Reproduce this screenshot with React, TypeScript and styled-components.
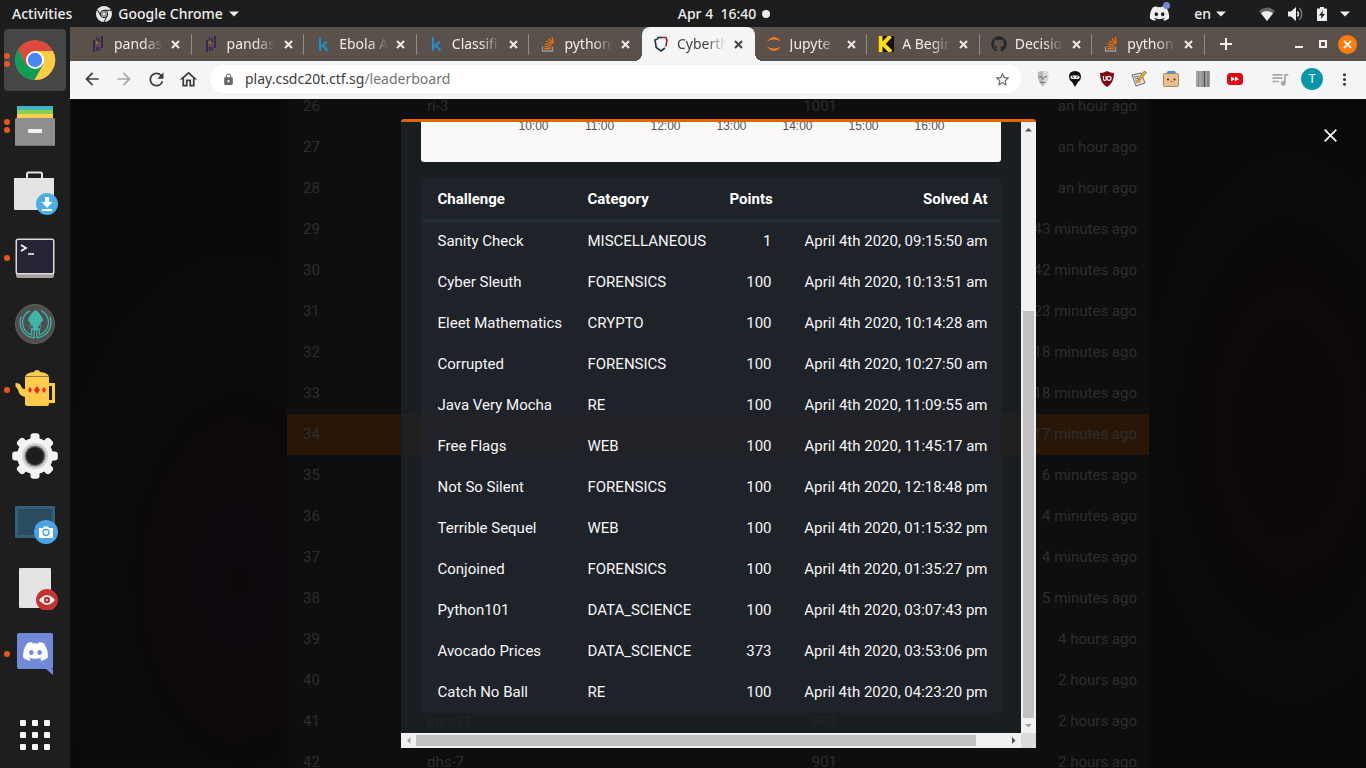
import React from "react";
import styled, { createGlobalStyle } from "styled-components";
import { FaDiscord, FaGithub, FaGitkraken } from "react-icons/fa";
import {
  MdArrowBack,
  MdArrowForward,
  MdRefresh,
  MdOutlineHome,
  MdLock,
  MdStarOutline,
  MdMoreVert,
  MdOutlineQueueMusic,
} from "react-icons/md";

const uiFont = `"Noto Sans", "Open Sans", sans-serif`;
const siteFont = `Roboto, "Noto Sans", sans-serif`;

const GlobalStyle = createGlobalStyle`
  * { box-sizing: border-box; }
  body { margin: 0; background: #0a0a0b; font-family: ${uiFont}; }
  button { border: 0; padding: 0; margin: 0; background: none; color: inherit; font: inherit; cursor: pointer; }
  a { color: inherit; text-decoration: none; }
  svg { display: block; flex: none; }
`;

const Desktop = styled.div`
  display: grid;
  grid-template-columns: 70px minmax(0, 1fr);
  grid-template-rows: 27px minmax(0, 1fr);
  height: 100vh;
  overflow: hidden;
`;

/* ---------- top bar ---------- */

const TopBar = styled.header`
  grid-column: 1 / -1;
  display: grid;
  grid-template-columns: 1fr auto 1fr;
  align-items: center;
  padding: 0 16px 0 12px;
  background: #1d1d1d;
  color: #eee;
  font-size: 14px;
  font-weight: 500;
  line-height: 27px;
`;

const BarGroup = styled.div<{ $end?: boolean }>`
  display: flex;
  align-items: center;
  gap: ${(p) => (p.$end ? 0 : 24)}px;
  justify-content: ${(p) => (p.$end ? "flex-end" : "flex-start")};
`;

const BarButton = styled.button<{ $gap?: number; $after?: number }>`
  display: flex;
  align-items: center;
  gap: ${(p) => p.$gap ?? 6}px;
  margin-right: ${(p) => p.$after ?? 0}px;
  white-space: pre;
`;

const Clock = styled(BarButton)`
  margin-left: 86px;
`;

const BadgeHolder = styled.span`
  position: relative;
  display: block;
`;

const Badge = styled.i`
  position: absolute;
  top: -1px;
  right: 0;
  width: 7px;
  height: 7px;
  border-radius: 50%;
  background: #7289da;
`;

const Caret = () => (
  <svg width="10" height="6" viewBox="0 0 10 6"><path d="M0 .5h10L5 5.5z" fill="#eee" /></svg>
);

/* ---------- dock ---------- */

const Dock = styled.nav`
  display: flex;
  flex-direction: column;
  gap: 4px;
  padding: 2px 4px;
  background: #1e1e1e;
`;

const DockItem = styled.button<{ $active?: boolean; $last?: boolean }>`
  position: relative;
  display: grid;
  place-items: center;
  flex: none;
  width: 62px;
  height: 62px;
  margin-top: ${(p) => (p.$last ? "auto" : 0)};
  border-radius: 4px;
  background: ${(p) => (p.$active ? "#464646" : "transparent")};
`;

const Dots = styled.span`
  position: absolute;
  left: 0;
  top: 0;
  bottom: 0;
  display: flex;
  flex-direction: column;
  justify-content: center;
  gap: 2px;
`;

const Dot = styled.i`
  width: 6px;
  height: 6px;
  border-radius: 50%;
  background: #e95420;
`;

const ChromeIcon = () => (
  <svg width="42" height="42" viewBox="0 0 42 42">
    <circle cx="21" cy="21" r="20" fill="#dd4b3e" />
    <path d="M21 12h18A20 20 0 0 1 20 41l9-15.500z" fill="#ffcd42" />
    <path d="M4.200 10A20 20 0 0 0 20.500 41l8-14.500-7.500 3.500-9-4z" fill="#109d58" />
    <circle cx="21" cy="21" r="9" fill="#fff" />
    <circle cx="21" cy="21" r="7.200" fill="#4688f4" />
  </svg>
);

const FilesIcon = () => (
  <svg width="42" height="42" viewBox="0 0 42 42">
    <path d="M3 1h36v5H3z" fill="#45b5c4" />
    <path d="M3 5h36v5H3z" fill="#86d04f" />
    <path d="M3 9h36v5H3z" fill="#ffcc52" />
    <rect x="1" y="13" width="40" height="28" rx="1.500" fill="#8f8f8f" />
    <path d="M1 40h40q-.3 1-1.500 1h-37Q1.300 41 1 40z" fill="#747474" />
    <rect x="14" y="24" width="14" height="4" rx="1" fill="#f2f2f2" />
  </svg>
);

const SoftwareIcon = () => (
  <svg width="48" height="48" viewBox="0 0 48 48">
    <path d="M16 10V6q0-1.500 1.500-1.500h12Q31 4.500 31 6v4" fill="none" stroke="#e4e4e4" strokeWidth="2" />
    <path d="M3 10h40v30.500q0 1.500-1.500 1.500h-37Q3 42 3 40.500z" fill="#e4e4e4" />
    <circle cx="36" cy="36" r="11" fill="#4bafe3" />
    <path d="M34 29h4v5h3.500L36 40l-5.500-6H34zM31 41h10v2H31z" fill="#fff" />
  </svg>
);

const TerminalIcon = () => (
  <svg width="42" height="42" viewBox="0 0 42 42">
    <rect x="2" y="4" width="38" height="37" rx="2.500" fill="#a49fa0" />
    <rect x="1.500" y="1.500" width="39" height="36" rx="2.500" fill="#ded9da" />
    <rect x="3" y="3" width="36" height="33" rx="1" fill="#282335" />
    <path d="M7 8l5 3-5 3M14 17h6" fill="none" stroke="#fff" strokeWidth="1.700" />
  </svg>
);

const KrakenDisc = styled.span`
  display: grid;
  place-items: center;
  width: 40px;
  height: 40px;
  border: 1px solid #606060;
  border-radius: 50%;
  background: #4f4f4f;
  color: #3fb4ab;
`;

const TeapotIcon = () => (
  <svg width="42" height="42" viewBox="0 0 42 42">
    <path d="M35 15.500h4.500v17H35" fill="none" stroke="#ffcb4c" strokeWidth="3" />
    <path d="M11 8q1-4.500 9-5 .5-2 3-2t3 2q8 .5 9 5v27q0 2-2 2H13q-2 0-2-2v-7q-6-1.500-6.500-6Q3 18 1.500 17.500V14q5 0 6 4 .8 2.500 3.500 2z" fill="#ffcb4c" />
    <path d="M11 7.500h24" stroke="#8d7b48" />
    <path d="M16 18l2 3-2 3-2-3zM23 17l3 4-3 4-3-4zM30 18l2 3-2 3-2-3z" fill="#e6281e" />
  </svg>
);

const GearIcon = () => (
  <svg width="46" height="46" viewBox="-23 -23 46 46">
    {[0, 45, 90, 135].map((a) => (
      <rect key={a} x="-4.500" y="-22.800" width="9" height="45.600" rx="3" fill="#f3f2f1" transform={`rotate(${a})`} />
    ))}
    <circle r="18" fill="#f5f4f3" />
    <circle r="13" fill="#d2d0ce" />
    <circle r="10.500" fill="#737270" />
    <circle r="9" fill="#1e1e1e" />
  </svg>
);

const ScreenshotIcon = () => (
  <svg width="48" height="44" viewBox="0 0 48 44">
    <rect x="4" y="6" width="40" height="32" rx="1" fill="#33617a" />
    <rect x="7" y="9" width="34" height="26" fill="#294c5f" />
    <circle cx="35" cy="32" r="12" fill="#4ba3e3" />
    <path d="M28 28h4l1-1.500h4l1 1.500h4v10H28z" fill="#fff" />
    <circle cx="35" cy="32.500" r="3" fill="none" stroke="#4ba3e3" strokeWidth="1.300" />
  </svg>
);

const ViewerIcon = () => (
  <svg width="48" height="44" viewBox="0 0 48 44">
    <rect x="8" y="2" width="32" height="40" rx="1" fill="#e4e4e4" />
    <circle cx="36" cy="34" r="11" fill="#c4332e" />
    <path d="M28 34q8-9.500 16 0-8 9.500-16 0z" fill="#fff" />
    <circle cx="36" cy="34" r="3.200" fill="#c4332e" />
    <circle cx="36" cy="34" r="1" fill="#fff" />
  </svg>
);

const DiscordTile = styled.span`
  position: relative;
  display: grid;
  place-items: center;
  width: 36px;
  height: 36px;
  margin-bottom: 6px;
  border-radius: 2px;
  background: #7289da;
  color: #fff;

  &::after {
    content: "";
    position: absolute;
    right: 0;
    top: 100%;
    border-top: 6px solid #7289da;
    border-left: 7px solid transparent;
  }
`;

const AppsIcon = () => (
  <svg width="30" height="30" viewBox="0 0 30 30">
    {[0, 12, 24].map((y) => [0, 12, 24].map((x) => (
      <rect key={`${x}-${y}`} x={x} y={y} width="6" height="6" rx="1" fill="#f7f7f7" />
    )))}
  </svg>
);

const dockItems: { label: string; dots: number; icon: React.ReactNode; active?: boolean }[] = [
  { label: "Google Chrome", dots: 2, icon: <ChromeIcon />, active: true },
  { label: "Files", dots: 2, icon: <FilesIcon /> },
  { label: "Software Updater", dots: 0, icon: <SoftwareIcon /> },
  { label: "Terminal", dots: 1, icon: <TerminalIcon /> },
  { label: "GitKraken", dots: 0, icon: <KrakenDisc><FaGitkraken size={33} /></KrakenDisc> },
  { label: "Teapot", dots: 1, icon: <TeapotIcon /> },
  { label: "Settings", dots: 0, icon: <GearIcon /> },
  { label: "Screenshot", dots: 0, icon: <ScreenshotIcon /> },
  { label: "Document Viewer", dots: 0, icon: <ViewerIcon /> },
  { label: "Discord", dots: 1, icon: <DiscordTile><FaDiscord size={27} /></DiscordTile> },
];

/* ---------- browser chrome ---------- */

const Browser = styled.main`
  display: grid;
  grid-template-columns: minmax(0, 1fr);
  grid-template-rows: 34px 38px minmax(0, 1fr);
  min-width: 0;
`;

const TabStrip = styled.div`
  display: flex;
  padding-left: 9px;
  background: #5a514b;
`;

const Tabs = styled.div`
  display: flex;
  flex: 1;
  min-width: 0;
`;

const Tab = styled.div<{ $active?: boolean; $divider?: boolean }>`
  position: relative;
  display: flex;
  flex: 1 1 0;
  align-items: center;
  min-width: 0;
  padding: 0 7px 0 11px;
  border-radius: 8px 8px 0 0;
  background: ${(p) => (p.$active ? "#f5f5f5" : "transparent")};
  color: ${(p) => (p.$active ? "#45413e" : "#eeeceb")};

  &::before,
  &::after {
    content: "";
    position: absolute;
    bottom: 0;
    display: ${(p) => (p.$active ? "block" : "none")};
    width: 8px;
    height: 8px;
  }
  &::before {
    right: 100%;
    background: radial-gradient(circle at 0 0, transparent 8px, #f5f5f5 8px);
  }
  &::after {
    left: 100%;
    background: radial-gradient(circle at 100% 0, transparent 8px, #f5f5f5 8px);
  }
  ${(p) => p.$divider && `
    &::after {
      display: block;
      left: auto;
      right: 0;
      top: 7px;
      width: 1px;
      height: 21px;
      background: #918b87;
    }
  `}
`;

const TabTitle = styled.a`
  flex: 1;
  min-width: 0;
  margin-left: 8px;
  overflow: hidden;
  white-space: nowrap;
  font-size: 14px;
  line-height: 20px;
  mask-image: linear-gradient(to right, #000 60%, transparent 100%);
`;

const TabClose = styled.button`
  display: grid;
  place-items: center;
  width: 18px;
  height: 18px;
  margin-left: 4px;
`;

const Cross = ({ size = 9, width = 2 }: { size?: number; width?: number }) => (
  <svg width={size} height={size} viewBox="0 0 9 9">
    <path d="M1 1l7 7M8 1L1 8" stroke="currentColor" strokeWidth={width} />
  </svg>
);

const WindowControls = styled.div`
  display: flex;
  align-items: center;
  padding: 0 9px;
  color: #f2f0ef;
`;

const ControlButton = styled.button<{ $close?: boolean; $after?: number }>`
  display: grid;
  place-items: center;
  width: ${(p) => (p.$close ? 19 : 24)}px;
  height: ${(p) => (p.$close ? 19 : 24)}px;
  margin-right: ${(p) => p.$after ?? 0}px;
  border-radius: 50%;
  background: ${(p) => (p.$close ? "#fa7c09" : "none")};
`;

const PandasIcon = () => (
  <svg width="16" height="16" viewBox="0 0 16 16">
    <path d="M3 4h2v12H3zM6 1h1.500v3.500H6zM6 11h1.500v4H6zM8.500 2H10v4H8.500zM8.500 11H10v3.500H8.500zM11 0h2v12h-2z" fill="#3a2550" />
    <path d="M6 5.500h1.500v2H6z" fill="#a98d12" />
    <path d="M8.500 8.500H10v2H8.500z" fill="#a0175e" />
  </svg>
);

const KaggleIcon = () => (
  <svg width="16" height="16" viewBox="0 0 16 16">
    <path d="M5 1v14M12 5.500L6 11M8 9.500l4.500 5.500" fill="none" stroke="#1e8fc8" strokeWidth="2" />
  </svg>
);

const StackIcon = () => (
  <svg width="16" height="16" viewBox="0 0 16 16">
    <path d="M2.500 10.500v4.500h10v-4.500" fill="none" stroke="#9c9a98" strokeWidth="1.300" />
    <path d="M4.200 12.700h6.600M4.300 10.500l6.600.6M4.900 7.800l6.300 1.700M6.300 5l5.700 3.300M8.800 2.500l4.100 5M12 1l1.500 6" stroke="#f2700d" strokeWidth="1.200" />
  </svg>
);

const ShieldIcon = () => (
  <svg width="16" height="16" viewBox="0 0 16 16">
    <path d="M5.500 1.500Q4.500 3.500 2 4l1.200 7.500L8 15l4-3" fill="none" stroke="#213443" strokeWidth="1.600" />
    <path d="M4.500 1.500H9" fill="none" stroke="#213443" strokeWidth="1.600" />
    <path d="M8.500 1.500H13l1 3-1.200 6" fill="none" stroke="#a3182f" strokeWidth="1.600" />
  </svg>
);

const JupyterIcon = () => (
  <svg width="16" height="16" viewBox="0 0 16 16">
    <path d="M1 5.500Q8-3.500 15 5.500 8 1.500 1 5.500zM1 10.500q7 9 14 0-7 4-14 0z" fill="#f37726" />
  </svg>
);

const KDIcon = () => (
  <svg width="16" height="16" viewBox="0 0 16 16">
    <path d="M0 0h16v16H0z" fill="#111" />
    <path d="M2.500 0v16M12.500 0L5 8l8 8" fill="none" stroke="#ffde17" strokeWidth="4" />
  </svg>
);

const tabs: { title: string; icon: React.ReactNode; active?: boolean }[] = [
  { title: "pandas", icon: <PandasIcon /> },
  { title: "pandas", icon: <PandasIcon /> },
  { title: "Ebola A", icon: <KaggleIcon /> },
  { title: "Classifi", icon: <KaggleIcon /> },
  { title: "python", icon: <StackIcon /> },
  { title: "Cyberth", icon: <ShieldIcon />, active: true },
  { title: "Jupyte", icon: <JupyterIcon /> },
  { title: "A Begin", icon: <KDIcon /> },
  { title: "Decisio", icon: <FaGithub size={16} color="#24292e" /> },
  { title: "python", icon: <StackIcon /> },
];

const Toolbar = styled.div`
  display: flex;
  align-items: center;
  padding: 0 6px 2px 6px;
  background: #f5f5f5;
  color: #403b38;
`;

const ToolButton = styled.button<{ $dim?: boolean; $after?: number }>`
  display: grid;
  place-items: center;
  width: 32px;
  height: 32px;
  margin-right: ${(p) => p.$after ?? 0}px;
  color: ${(p) => (p.$dim ? "#a9a7a5" : "inherit")};
`;

const AddressBar = styled.form`
  display: flex;
  flex: 1;
  align-items: center;
  height: 28px;
  margin: 0 6px;
  padding: 0 10px 0 12px;
  border-radius: 14px;
  background: #fff;
  color: #6b6764;
`;

const AddressField = styled.label`
  position: relative;
  flex: 1;
  margin-left: 10px;
  font-size: 14px;
  line-height: 20px;
`;

const AddressInput = styled.input`
  display: block;
  width: 100%;
  padding: 0;
  border: 0;
  outline: 0;
  background: transparent;
  font: inherit;
`;

const AddressText = styled.span`
  position: absolute;
  inset: 0;
  color: #77736f;
  pointer-events: none;

  b { color: #3f3b38; font-weight: 400; }
`;

const Avatar = styled.span`
  display: grid;
  place-items: center;
  width: 22px;
  height: 22px;
  border-radius: 50%;
  background: #0997a7;
  color: #fff;
  font: 12px/22px Roboto, sans-serif;
`;

const extensions: { label: string; icon: React.ReactNode }[] = [
  {
    label: "Mask",
    icon: (
      <svg width="16" height="16" viewBox="0 0 16 16">
        <path d="M3 1q5-2 10 0 1.500 9-5 15Q1.500 10 3 1z" fill="#b9b9b9" />
        <path d="M8 0q3 0 5 1 1.500 9-5 15z" fill="#dadada" />
        <path d="M4 5.500l3 .7M9 6.200l3-.7M5.500 11q2.500 1.500 5 0M8 6v3" stroke="#606060" fill="none" />
      </svg>
    ),
  },
  {
    label: "Privacy",
    icon: (
      <svg width="16" height="16" viewBox="0 0 16 16">
        <path d="M8 0q6 0 6 6 0 3-3 5l-3 5-3-5Q2 9 2 6q0-6 6-6z" fill="#111" />
        <rect x="3.500" y="4.500" width="9" height="3.500" rx="1.700" fill="#fff" />
        <path d="M5 5.500l2 1M11 5.500l-2 1" stroke="#111" />
      </svg>
    ),
  },
  {
    label: "Blocker",
    icon: (
      <svg width="16" height="16" viewBox="0 0 16 16">
        <path d="M8 0q3 2 7 2 0 10-7 14Q1 12 1 2q4 0 7-2z" fill="#800610" />
        <path d="M4.500 5v3q0 1.500 1.300 1.500T7.200 8V5" fill="none" stroke="#fff" strokeWidth="1.200" />
        <circle cx="10" cy="7.300" r="2" fill="none" stroke="#fff" strokeWidth="1.200" />
      </svg>
    ),
  },
  {
    label: "Notes",
    icon: (
      <svg width="16" height="16" viewBox="0 0 16 16">
        <path d="M1 4l9-2 4 10-9 3z" fill="#e7e5e0" stroke="#6c6c6c" />
        <path d="M3 6l5-1M4 8l3-.7M5 12l5-2" stroke="#777" />
        <path d="M13.500 0l2 1.500-6 7-2.500 1 .5-2.500z" fill="#f0b21c" stroke="#5a4a20" strokeWidth=".6" />
        <path d="M4 9q4-1 5 1t-4 2z" fill="#f29549" />
      </svg>
    ),
  },
  {
    label: "Box",
    icon: (
      <svg width="16" height="16" viewBox="0 0 16 16">
        <path d="M3.500 3q0-3 2.500-3h5q2 0 2 3z" fill="#4a8af4" />
        <rect x=".5" y="2.500" width="15" height="13" rx="1" fill="#e9c08c" stroke="#a38762" />
        <circle cx="5" cy="8.500" r="1" fill="#222" />
        <circle cx="11.500" cy="8.500" r="1" fill="#222" />
        <path d="M7.500 10.500h2" stroke="#b5483a" />
      </svg>
    ),
  },
  {
    label: "Bars",
    icon: (
      <svg width="14" height="16" viewBox="0 0 14 16">
        <path d="M0 0h14v16H0z" fill="#a6a6a6" />
        <path d="M2.500 0v16M6 0v16" stroke="#868686" />
        <path d="M8.500 0v16" stroke="#505050" strokeWidth="1.500" />
        <path d="M12 0v16" stroke="#7a7a7a" strokeWidth="1.500" />
      </svg>
    ),
  },
  {
    label: "Video speed",
    icon: (
      <svg width="16" height="14" viewBox="0 0 16 14">
        <rect y="1" width="16" height="12" rx="3.500" fill="#df0914" />
        <path d="M4 4.500L8 7l-4 2.500zM8 4.500L12 7 8 9.500z" fill="#fff" />
      </svg>
    ),
  },
];

/* ---------- leaderboard page ---------- */

const Page = styled.section`
  position: relative;
  overflow: hidden;
  background:
    radial-gradient(ellipse 160px 300px at 1220px 330px, #0e070c, transparent),
    radial-gradient(ellipse 200px 340px at 170px 480px, #0e080d, transparent),
    #0a0a0b;
  font-family: ${siteFont};
  font-size: 15px;
`;

const Board = styled.table`
  width: 862px;
  max-width: 100%;
  margin: -13px auto 0;
  border-collapse: collapse;
  table-layout: fixed;
  background: #0e0e0f;
  color: #2d2d2d;
`;

const BoardRow = styled.tr<{ $mine?: boolean }>`
  height: 41px;
  background: ${(p) => (p.$mine ? "#2a1607" : "transparent")};
`;

const BoardCell = styled.td<{ $width?: string; $right?: boolean }>`
  width: ${(p) => p.$width ?? "auto"};
  padding: 0 12px 2px 16px;
  text-align: ${(p) => (p.$right ? "right" : "left")};
`;

const board: [number, string, string, string][] = [
  [26, "ri-3", "1001", "an hour ago"],
  [27, "", "1001", "an hour ago"],
  [28, "hci-6", "1001", "an hour ago"],
  [29, "hci-4", "1001", "43 minutes ago"],
  [30, "njc-6", "1001", "42 minutes ago"],
  [31, "nushs-6", "1001", "23 minutes ago"],
  [32, "hci-12", "1001", "18 minutes ago"],
  [33, "hci-11", "1001", "18 minutes ago"],
  [34, "nyjc-1", "1001", "17 minutes ago"],
  [35, "nyjc-4", "1001", "6 minutes ago"],
  [36, "hci-10", "948", "4 minutes ago"],
  [37, "nushs-3", "933", "4 minutes ago"],
  [38, "ejc-13", "908", "5 minutes ago"],
  [39, "hci-20", "901", "4 hours ago"],
  [40, "dhs-8", "901", "2 hours ago"],
  [41, "jpjc-11", "901", "2 hours ago"],
  [42, "dhs-7", "901", "2 hours ago"],
];

/* ---------- team modal ---------- */

const Overlay = styled.div`
  position: absolute;
  inset: 0;
  display: flex;
  justify-content: center;
  padding: 20px;
`;

const CloseModal = styled.button`
  position: absolute;
  top: 24px;
  right: 24px;
  display: grid;
  place-items: center;
  width: 24px;
  height: 24px;
  color: #fff;
`;

const Modal = styled.div`
  display: grid;
  grid-template-columns: minmax(0, 1fr) 15px;
  grid-template-rows: minmax(0, 1fr) 15px;
  width: 635px;
  max-width: 100%;
  border-top: 3px solid #e46500;
  border-radius: 3px 3px 0 0;
`;

const ModalContent = styled.div`
  display: flex;
  flex-direction: column;
  justify-content: flex-end;
  gap: 16px;
  overflow: hidden;
  padding: 20px;
  background: rgba(29, 35, 38, 0.8);
`;

const ChartCard = styled.div`
  display: flex;
  flex: none;
  align-items: flex-end;
  height: 300px;
  padding: 0 23px 28px 80px;
  border-radius: 3px;
  background: #fcf9fa;
  color: #555;
  font: 12px/16px "Liberation Sans", sans-serif;
`;

const HourLabel = styled.span`
  width: 66px;
  text-align: center;
`;

const Solves = styled.table`
  flex: none;
  width: 100%;
  border-collapse: collapse;
  table-layout: fixed;
  border-radius: 3px;
  background: rgba(33, 36, 46, 0.6);
  color: #f6f6f6;
`;

const Column = styled.th<{ $width?: string; $right?: boolean }>`
  width: ${(p) => p.$width ?? "auto"};
  height: 43px;
  padding: 0 13px 0 17px;
  border-bottom: 2px solid #212b32;
  color: #fff;
  font-weight: 700;
  text-align: ${(p) => (p.$right ? "right" : "left")};
`;

const Cell = styled.td<{ $right?: boolean }>`
  height: 41px;
  padding: 0 ${(p) => (p.$right ? 13 : 0)}px 2px ${(p) => (p.$right ? 0 : 17)}px;
  text-align: ${(p) => (p.$right ? "right" : "left")};
  white-space: nowrap;
`;

const solves: [string, string, string, string][] = [
  ["Sanity Check", "MISCELLANEOUS", "1", "09:15:50 am"],
  ["Cyber Sleuth", "FORENSICS", "100", "10:13:51 am"],
  ["Eleet Mathematics", "CRYPTO", "100", "10:14:28 am"],
  ["Corrupted", "FORENSICS", "100", "10:27:50 am"],
  ["Java Very Mocha", "RE", "100", "11:09:55 am"],
  ["Free Flags", "WEB", "100", "11:45:17 am"],
  ["Not So Silent", "FORENSICS", "100", "12:18:48 pm"],
  ["Terrible Sequel", "WEB", "100", "01:15:32 pm"],
  ["Conjoined", "FORENSICS", "100", "01:35:27 pm"],
  ["Python101", "DATA_SCIENCE", "100", "03:07:43 pm"],
  ["Avocado Prices", "DATA_SCIENCE", "373", "03:53:06 pm"],
  ["Catch No Ball", "RE", "100", "04:23:20 pm"],
];

const Track = styled.div<{ $vertical?: boolean }>`
  display: flex;
  flex-direction: ${(p) => (p.$vertical ? "column" : "row")};
  background: #f1f1f1;
`;

const TrackArrow = styled.button`
  display: grid;
  place-items: center;
  flex: none;
  width: 15px;
  height: 15px;
`;

const Slide = styled.div<{ $vertical?: boolean; $end?: boolean }>`
  display: flex;
  flex: 1;
  flex-direction: ${(p) => (p.$vertical ? "column" : "row")};
  justify-content: ${(p) => (p.$end ? "flex-end" : "flex-start")};
  padding: ${(p) => (p.$vertical ? "0 2px" : "2px 0")};
`;

const Thumb = styled.div<{ $vertical?: boolean; $length: string }>`
  width: ${(p) => (p.$vertical ? "11px" : p.$length)};
  height: ${(p) => (p.$vertical ? p.$length : "11px")};
  background: #c1c1c1;
`;

const Corner = styled.div`
  background: #dcdcdc;
`;

const Arrow = ({ d, dim }: { d: string; dim?: boolean }) => (
  <svg width="7" height="7" viewBox="0 0 7 7"><path d={d} fill={dim ? "#a3a3a3" : "#505050"} /></svg>
);

export default function App() {
  return (
    <Desktop>
      <GlobalStyle />
      <TopBar>
        <BarGroup>
          <BarButton>Activities</BarButton>
          <BarButton>
            <svg width="16" height="16" viewBox="0 0 16 16">
              <circle cx="8" cy="8" r="8" fill="#e6e6e6" />
              <circle cx="8" cy="8" r="3.700" fill="none" stroke="#1d1d1d" />
              <circle cx="8" cy="8" r="2.200" fill="none" stroke="#1d1d1d" strokeWidth=".7" />
              <path d="M8 4.300h7M4.800 9.900L1.500 4M11.200 9.900L8 16" stroke="#1d1d1d" fill="none" />
            </svg>
            Google Chrome
            <Caret />
          </BarButton>
        </BarGroup>
        <Clock>
          {"Apr 4  16:40"}
          <svg width="8" height="8" viewBox="0 0 8 8"><circle cx="4" cy="4" r="4" fill="#eee" /></svg>
        </Clock>
        <BarGroup $end>
          <BarButton $after={24} aria-label="Discord">
            <BadgeHolder><FaDiscord size={21} /><Badge /></BadgeHolder>
          </BarButton>
          <BarButton $after={33} $gap={5}>en<Caret /></BarButton>
          <BarButton $gap={13} aria-label="System menu">
            <svg width="16" height="14" viewBox="0 0 16 14">
              <path d="M0 4q8-7 16 0l-8 10z" fill="#666" />
              <path d="M2 6.300q6-4.600 12 0L8 14z" fill="#eee" />
            </svg>
            <svg width="16" height="14" viewBox="0 0 16 14">
              <path d="M0 4.500h3L8 0v14L3 9.500H0z" fill="#eee" />
              <path d="M9.500 4.500q2 2.500 0 5" fill="none" stroke="#eee" strokeWidth="1.400" />
              <path d="M11.500 1q4.500 6 0 12" fill="none" stroke="#777" strokeWidth="1.400" />
            </svg>
            <svg width="10" height="14" viewBox="0 0 10 14">
              <path d="M0 1.500h3V0h4v1.500h3V14H0z" fill="#eee" />
              <path d="M6 3.500L2 8.500h2.500L4 12l4-5H5.500z" fill="#1d1d1d" />
            </svg>
            <Caret />
          </BarButton>
        </BarGroup>
      </TopBar>

      <Dock>
        {dockItems.map((item) => (
          <DockItem key={item.label} $active={item.active} aria-label={item.label}>
            <Dots>{Array.from({ length: item.dots }, (_, i) => <Dot key={i} />)}</Dots>
            {item.icon}
          </DockItem>
        ))}
        <DockItem $last aria-label="Show Applications"><AppsIcon /></DockItem>
      </Dock>

      <Browser>
        <TabStrip>
          <Tabs>
            {tabs.map((tab, i) => (
              <Tab key={i} $active={tab.active} $divider={!tab.active && !tabs[i + 1]?.active}>
                {tab.icon}
                <TabTitle href="#">{tab.title}</TabTitle>
                <TabClose aria-label="Close tab"><Cross /></TabClose>
              </Tab>
            ))}
          </Tabs>
          <WindowControls>
            <ControlButton aria-label="New tab" $after={49}>
              <svg width="12" height="12" viewBox="0 0 12 12"><path d="M6 0v12M0 6h12" stroke="currentColor" strokeWidth="2" /></svg>
            </ControlButton>
            <ControlButton aria-label="Minimize">
              <svg width="8" height="8" viewBox="0 0 8 8"><path d="M0 7h8" stroke="currentColor" strokeWidth="2" /></svg>
            </ControlButton>
            <ControlButton aria-label="Maximize" $after={3}>
              <svg width="8" height="8" viewBox="0 0 8 8"><path d="M1 1h6v6H1z" fill="none" stroke="currentColor" strokeWidth="2" /></svg>
            </ControlButton>
            <ControlButton $close aria-label="Close window"><Cross /></ControlButton>
          </WindowControls>
        </TabStrip>

        <Toolbar>
          <ToolButton aria-label="Back"><MdArrowBack size={20} /></ToolButton>
          <ToolButton aria-label="Forward" $dim><MdArrowForward size={20} /></ToolButton>
          <ToolButton aria-label="Reload"><MdRefresh size={21} /></ToolButton>
          <ToolButton aria-label="Home"><MdOutlineHome size={21} /></ToolButton>
          <AddressBar>
            <MdLock size={13} />
            <AddressField>
              <AddressInput aria-label="Address" defaultValue="" />
              <AddressText><b>play.csdc20t.ctf.sg</b>/leaderboard</AddressText>
            </AddressField>
            <MdStarOutline size={17} />
          </AddressBar>
          {extensions.map((ext, i) => (
            <ToolButton key={ext.label} aria-label={ext.label} $after={i === extensions.length - 1 ? 13 : 0}>
              {ext.icon}
            </ToolButton>
          ))}
          <ToolButton aria-label="Media" $dim><MdOutlineQueueMusic size={20} /></ToolButton>
          <ToolButton aria-label="Profile"><Avatar>T</Avatar></ToolButton>
          <ToolButton aria-label="Menu"><MdMoreVert size={19} /></ToolButton>
        </Toolbar>

        <Page>
          <Board>
            <tbody>
              {board.map(([rank, team, score, when]) => (
                <BoardRow key={rank} $mine={rank === 34}>
                  <BoardCell $width="124px">{rank}</BoardCell>
                  <BoardCell>{team}</BoardCell>
                  <BoardCell $right $width="140px">{score}</BoardCell>
                  <BoardCell $right $width="300px">{when}</BoardCell>
                </BoardRow>
              ))}
            </tbody>
          </Board>

          <Overlay>
            <Modal role="dialog" aria-label="Team solves">
              <ModalContent>
                <ChartCard>
                  {["10:00", "11:00", "12:00", "13:00", "14:00", "15:00", "16:00"].map((h) => (
                    <HourLabel key={h}>{h}</HourLabel>
                  ))}
                </ChartCard>
                <Solves>
                  <thead>
                    <tr>
                      <Column $width="150px">Challenge</Column>
                      <Column $width="142px">Category</Column>
                      <Column $width="72px" $right>Points</Column>
                      <Column $right>Solved At</Column>
                    </tr>
                  </thead>
                  <tbody>
                    {solves.map(([name, category, points, time]) => (
                      <tr key={name}>
                        <Cell>{name}</Cell>
                        <Cell>{category}</Cell>
                        <Cell $right>{points}</Cell>
                        <Cell $right>April 4th 2020, {time}</Cell>
                      </tr>
                    ))}
                  </tbody>
                </Solves>
              </ModalContent>
              <Track $vertical>
                <TrackArrow aria-label="Scroll up"><Arrow d="M0 5.500h7L3.500 2z" /></TrackArrow>
                <Slide $vertical $end><Thumb $vertical $length="70%" /></Slide>
                <TrackArrow aria-label="Scroll down"><Arrow dim d="M0 2h7L3.500 5.500z" /></TrackArrow>
              </Track>
              <Track>
                <TrackArrow aria-label="Scroll left"><Arrow dim d="M5.500 0v7L2 3.500z" /></TrackArrow>
                <Slide><Thumb $length="95%" /></Slide>
                <TrackArrow aria-label="Scroll right"><Arrow d="M2 0v7l3.500-3.500z" /></TrackArrow>
              </Track>
              <Corner />
            </Modal>
            <CloseModal aria-label="Close"><Cross size={15} width={1} /></CloseModal>
          </Overlay>
        </Page>
      </Browser>
    </Desktop>
  );
}
